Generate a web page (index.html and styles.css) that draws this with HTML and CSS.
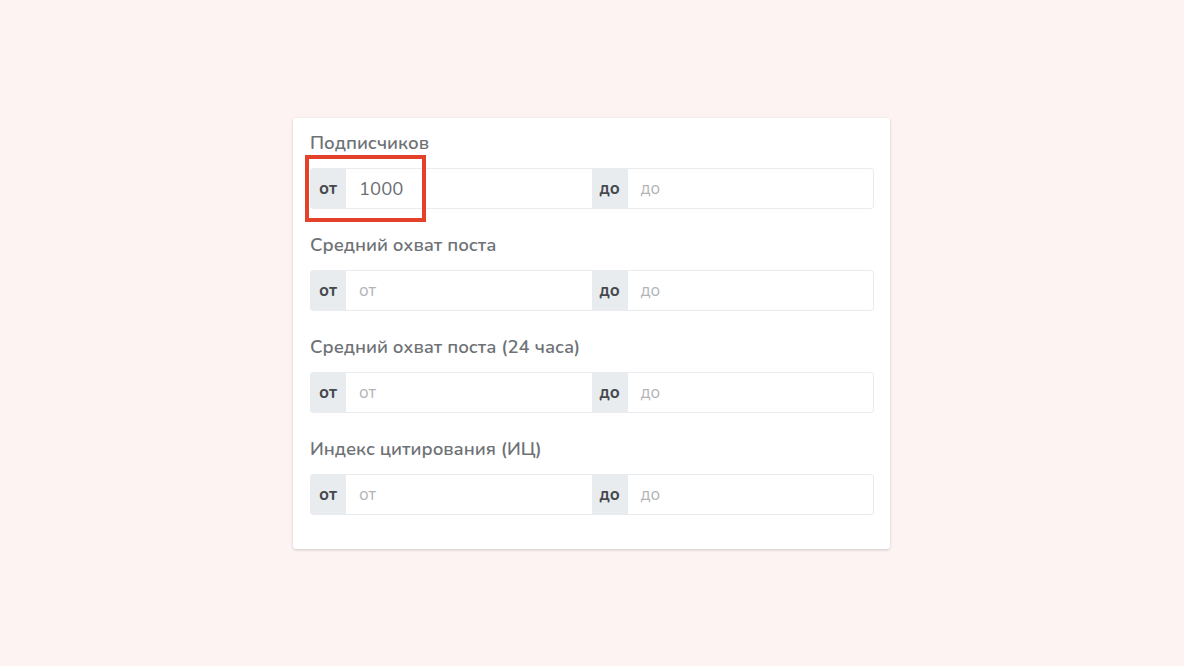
FILE: index.html
```html
<!DOCTYPE html>
<html lang="ru">
<head>
<meta charset="utf-8">
<title>Фильтры</title>
<link rel="stylesheet" href="styles.css">
</head>
<body>
<div class="page">
  <div class="card">
    <div class="field">
      <div class="label">Подписчиков</div>
      <div class="group">
        <span class="addon">от</span>
        <span class="input value">1000</span>
        <span class="addon">до</span>
        <span class="input placeholder">до</span>
        <span class="highlight"></span>
      </div>
    </div>
    <div class="field">
      <div class="label">Средний охват поста</div>
      <div class="group">
        <span class="addon">от</span>
        <span class="input placeholder">от</span>
        <span class="addon">до</span>
        <span class="input placeholder">до</span>
      </div>
    </div>
    <div class="field">
      <div class="label">Средний охват поста (24 часа)</div>
      <div class="group">
        <span class="addon">от</span>
        <span class="input placeholder">от</span>
        <span class="addon">до</span>
        <span class="input placeholder">до</span>
      </div>
    </div>
    <div class="field">
      <div class="label">Индекс цитирования (ИЦ)</div>
      <div class="group">
        <span class="addon">от</span>
        <span class="input placeholder">от</span>
        <span class="addon">до</span>
        <span class="input placeholder">до</span>
      </div>
    </div>
  </div>
</div>
</body>
</html>
```

FILE: styles.css
```css
* { box-sizing: border-box; }
html, body { margin: 0; padding: 0; }
body {
  background: #fdf3f3;
  font-family: "Nunito", "Lato", "Noto Sans", sans-serif;
}
.page {
  height: 666px;
  padding: 118px 0 0 293px;
}
.card {
  width: 597px;
  height: 431px;
  background: #fff;
  border-radius: 3px;
  box-shadow: 0 1px 3px rgba(0,0,0,0.18);
  padding: 12px 16px 34px 17px;
  display: flex;
  flex-direction: column;
  gap: 23px;
}
.label {
  font-size: 18.5px;
  line-height: 26px;
  font-weight: 600;
  color: #6e7276;
  margin-bottom: 12px;
}
.group {
  position: relative;
  display: flex;
  height: 41px;
  border: 1px solid #e9ebee;
  border-radius: 3px;
}
.addon {
  width: 36px;
  flex: none;
  display: flex;
  align-items: center;
  justify-content: center;
  background: #e9ecef;
  color: #45494d;
  font-size: 17px;
  font-weight: 700;
}
.group .addon:first-child { border-radius: 3px 0 0 3px; margin-left: -1px; }
.input {
  flex: 1;
  display: flex;
  align-items: center;
  padding-left: 13px;
  font-size: 17px;
}
.value { color: #6a6e73; font-size: 18.5px; padding-left: 13px; }
.placeholder { color: #b2b5b8; }
.highlight {
  position: absolute;
  left: -6px;
  top: -14px;
  width: 121px;
  height: 67px;
  border: 4px solid #e4412b;
}
```
